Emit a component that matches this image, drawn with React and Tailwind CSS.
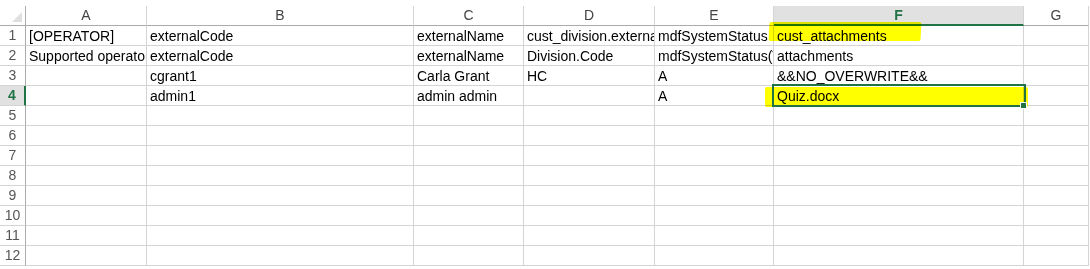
import React from "react";

const cols = ["A", "B", "C", "D", "E", "F", "G"];

const rows = [
  ["[OPERATOR]", "externalCode", "externalName", "cust_division.externalCode", "mdfSystemStatus", "cust_attachments", ""],
  ["Supported operators", "externalCode", "externalName", "Division.Code", "mdfSystemStatus(Valid Values : A/I)", "attachments", ""],
  ["", "cgrant1", "Carla Grant", "HC", "A", "&&NO_OVERWRITE&&", ""],
  ["", "admin1", "admin admin", "", "A", "Quiz.docx", ""],
];

const emptyRows = [5, 6, 7, 8, 9, 10, 11, 12];

export default function App() {
  return (
    <div
      className="relative w-[1090px] h-[269px] overflow-hidden bg-white pt-[6px] text-[14px] text-black"
      style={{ fontFamily: '"Liberation Sans", Arial, sans-serif' }}
    >
      <div className="grid grid-cols-[26px_121px_267px_110px_131px_119px_250px_65px]">
        {/* corner */}
        <div className="relative h-[20px] border-r border-b border-[#ababab]">
          <div className="absolute right-[3px] bottom-[3px] w-0 h-0 border-l-[10px] border-l-transparent border-b-[10px] border-b-[#dfdfdf]" />
        </div>

        {/* column headers */}
        {cols.map((c) =>
          c === "F" ? (
            <div
              key={c}
              className="h-[20px] flex items-center justify-center bg-[#e1e1e1] border-r border-r-[#d4d4d4] border-b-2 border-b-[#217346] text-[#217346] font-bold"
            >
              {c}
            </div>
          ) : (
            <div
              key={c}
              className="h-[20px] flex items-center justify-center border-r border-r-[#d4d4d4] border-b border-b-[#ababab] text-[#444]"
            >
              {c}
            </div>
          )
        )}

        {/* data rows */}
        {rows.map((r, i) => (
          <React.Fragment key={i}>
            {i === 3 ? (
              <div className="h-[20px] flex items-center justify-center bg-[#e1e1e1] border-r-2 border-r-[#217346] border-b border-b-[#d4d4d4] text-[#217346] font-bold">
                {i + 1}
              </div>
            ) : (
              <div className="h-[20px] flex items-center justify-center border-r border-r-[#ababab] border-b border-b-[#d4d4d4] text-[#555]">
                {i + 1}
              </div>
            )}
            {r.map((v, j) => (
              <div
                key={j}
                className="h-[20px] flex items-center px-[3px] pt-[1px] border-r border-b border-[#d4d4d4] overflow-hidden whitespace-nowrap"
              >
                {v}
              </div>
            ))}
          </React.Fragment>
        ))}

        {emptyRows.map((n) => (
          <React.Fragment key={n}>
            <div className="h-[20px] flex items-center justify-center border-r border-r-[#ababab] border-b border-b-[#d4d4d4] text-[#555]">
              {n}
            </div>
            {cols.map((c) => (
              <div key={c} className="h-[20px] border-r border-b border-[#d4d4d4]" />
            ))}
          </React.Fragment>
        ))}
      </div>

      {/* marker highlights */}
      <div className="absolute left-[769px] top-[22px] w-[152px] h-[19px] bg-[#ffff00] mix-blend-multiply rounded-[2px] -skew-x-3" />
      <div className="absolute left-[765px] top-[87px] w-[263px] h-[20px] bg-[#ffff00] mix-blend-multiply rounded-[2px]" />

      {/* selected cell F4 */}
      <div className="absolute left-[772px] top-[84px] w-[254px] h-[23px] border-2 border-[#217346]" />
      <div className="absolute left-[1020px] top-[102px] w-[7px] h-[7px] bg-[#217346] border border-white" />
    </div>
  );
}
